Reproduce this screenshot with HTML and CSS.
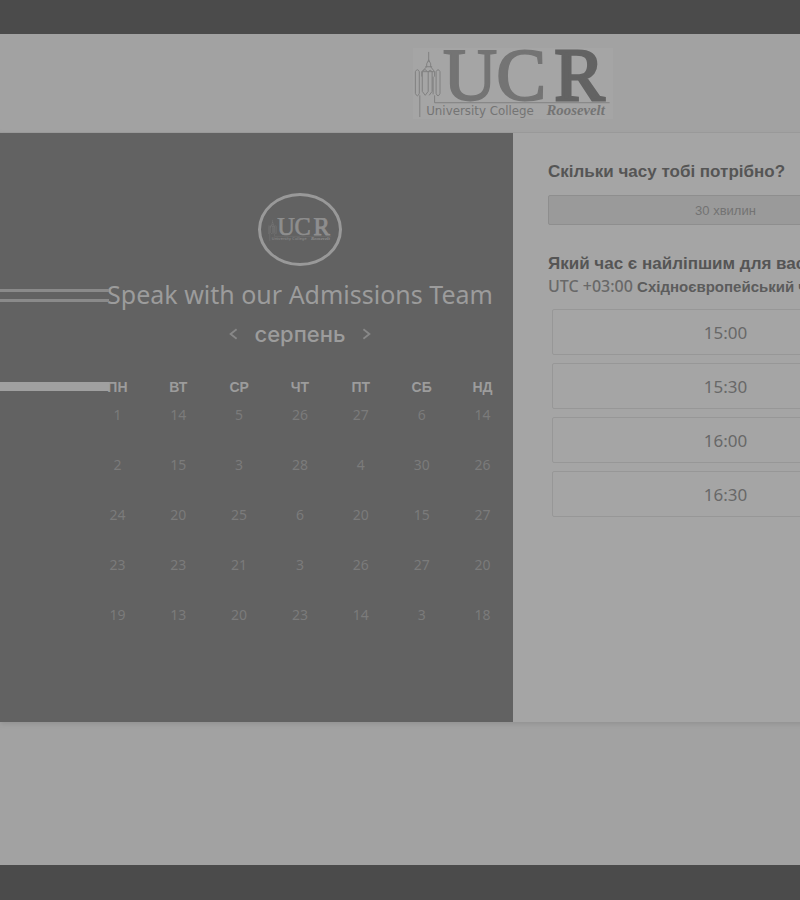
FILE: index.html
```html
<!DOCTYPE html>
<html lang="uk">
<head>
<meta charset="utf-8">
<title>University College Roosevelt</title>
<link rel="stylesheet" href="styles.css">
</head>
<body>
<svg width="0" height="0" class="defs" aria-hidden="true">
  <symbol id="ucr" viewBox="0 0 200 72">
    <g fill="none" stroke="currentColor" stroke-width="1" opacity=".75">
      <path d="M14.500 4v10M14.500 12l-2 4v3l-5 5v5M14.500 12l2 4v3l4 5v5M8 24h12M11 19h7"/>
      <path d="M1 24q2-4 4 0v22q-2 5-4 0zM8 24q3-4 5 0M8 24v20l3 4 3-4V24q2-3 4 0v20l-3 4M22 24q2-4 4 0v22q-2 5-4 0zM19 29v18"/>
      <path d="M5.500 48v22M20.500 48v7.500H198"/>
    </g>
    <g class="logo-letters">
      <text x="29" y="53">U</text>
      <text x="83" y="53">C</text>
      <text x="142" y="53" class="logo-r">R</text>
    </g>
    <text x="12" y="68" class="logo-name" fill="currentColor">University College</text>
    <text x="134" y="68" class="logo-roosevelt" fill="currentColor">Roosevelt</text>
  </symbol>
</svg>
<div class="page">
  <div class="bar"></div>
  <header class="header">
    <svg class="logo" role="img" aria-label="UCR University College Roosevelt"><use href="#ucr"/></svg>
  </header>
  <main class="booking">
    <section class="calendar">
      <div class="rules"><i class="rule"></i><i class="rule"></i><i class="rule thick"></i></div>
      <div class="calendar-body">
        <div class="badge"><svg class="badge-logo" aria-hidden="true"><use href="#ucr"/></svg></div>
        <h1 class="title">Speak with our Admissions Team</h1>
        <div class="month">
          <button class="nav" aria-label="Попередній місяць"><svg viewBox="0 0 8 10"><path d="M7 1L2 5l5 4"/></svg></button>
          <span>серпень</span>
          <button class="nav" aria-label="Наступний місяць"><svg viewBox="0 0 8 10"><path d="M1 1l5 4-5 4"/></svg></button>
        </div>
        <table class="days">
          <thead><tr><th>ПН</th><th>ВТ</th><th>СР</th><th>ЧТ</th><th>ПТ</th><th>СБ</th><th>НД</th></tr></thead>
          <tbody>
            <tr><td>1</td><td>14</td><td>5</td><td>26</td><td>27</td><td>6</td><td>14</td></tr>
            <tr><td>2</td><td>15</td><td>3</td><td>28</td><td>4</td><td>30</td><td>26</td></tr>
            <tr><td>24</td><td>20</td><td>25</td><td>6</td><td>20</td><td>15</td><td>27</td></tr>
            <tr><td>23</td><td>23</td><td>21</td><td>3</td><td>26</td><td>27</td><td>20</td></tr>
            <tr><td>19</td><td>13</td><td>20</td><td>23</td><td>14</td><td>3</td><td>18</td></tr>
          </tbody>
        </table>
      </div>
    </section>
    <section class="times">
      <h2 class="question">Скільки часу тобі потрібно?</h2>
      <button class="duration">30 хвилин</button>
      <h2 class="question">Який час є найліпшим для вас?</h2>
      <p class="zone"><span class="offset">UTC +03:00</span> Східноєвропейський час</p>
      <div class="slots">
        <button class="slot">15:00</button>
        <button class="slot">15:30</button>
        <button class="slot">16:00</button>
        <button class="slot">16:30</button>
      </div>
    </section>
  </main>
  <div class="space"></div>
  <div class="bar"></div>
</div>
</body>
</html>
```
FILE: styles.css
```css
* { box-sizing: border-box; }
body {
  margin: 0;
  overflow-x: hidden;
  background: #a2a2a2;
  font-family: "Noto Sans", "Liberation Sans", sans-serif;
}
button { font: inherit; color: inherit; cursor: pointer; }
h1, h2, p { margin: 0; }
.defs { position: absolute; }

.page {
  display: flex;
  flex-direction: column;
  min-width: 1026px;
  min-height: 100vh;
}
.bar { height: 34px; background: #4b4b4b; }
.bar:last-child { height: 35px; }
.space { flex: 1; }

.header {
  display: flex;
  justify-content: center;
  padding: 14px 0 13px;
  border-bottom: 1px solid #9b9b9b;
}
.logo { --mark-strong: #636363; width: 200px; height: 71px; color: #747474; background: #a5a5a5; }
.logo-letters { font: 76px "Liberation Serif", serif; fill: currentColor; stroke: currentColor; stroke-width: 2; }
.logo-r { fill: var(--mark-strong); stroke: var(--mark-strong); stroke-width: 3; }
.logo-name { font: 12px "DejaVu Sans", sans-serif; }
.logo-roosevelt { font: italic bold 15px "Liberation Serif", serif; }

.booking {
  display: grid;
  grid-template-columns: 1fr 1fr;
  min-height: 589px;
  box-shadow: 0 2px 5px #929292;
}
.calendar { position: relative; background: #626262; color: #9c9c9c; }
.calendar-body {
  display: flex;
  flex-direction: column;
  align-items: center;
  margin-left: 87px;
  padding-top: 60px;
}
.rules { position: absolute; top: 156px; left: 0; width: 109px; }
.rule { display: block; height: 3px; margin-bottom: 7px; background: #8a8a8a; }
.thick { height: 9px; margin-top: 80px; background: #a0a0a0; }

.badge {
  display: flex;
  align-items: center;
  justify-content: center;
  width: 84px;
  height: 73px;
  border: 3px solid #999;
  border-radius: 50%;
}
.badge-logo { --mark-strong: #8e8e8e; width: 64px; height: 24px; color: #8e8e8e; }
.title { margin-top: 8px; font-size: 25px; font-weight: 400; line-height: 40px; white-space: nowrap; }
.month {
  display: flex;
  align-items: center;
  gap: 16px;
  font: 500 22px/40px Inter, "Liberation Sans", sans-serif;
}
.nav { display: flex; padding: 0; border: 0; background: none; }
.nav svg { width: 10px; height: 12px; fill: none; stroke: #888; stroke-width: 1.5; }
.days {
  width: 100%;
  margin-top: 22px;
  border-collapse: collapse;
  table-layout: fixed;
  text-align: center;
}
.days th { padding: 0; font: bold 14px/22px "Liberation Sans", sans-serif; }
.days td { height: 50px; padding: 0; color: #7b7b7b; font-size: 14px; line-height: 34px; vertical-align: top; }

.times { padding: 28px 123px 0 35px; background: #a5a5a5; color: #555; }
.question { font: bold 17px/22px "Liberation Sans", sans-serif; white-space: nowrap; }
.duration {
  display: block;
  width: 100%;
  height: 30px;
  margin: 12px 0 28px;
  padding: 0;
  border: 1px solid #8e8e8e;
  border-radius: 2px;
  background: #9a9a9a;
  color: #737373;
  font: 13px "Liberation Sans", sans-serif;
}
.zone { color: #5c5c5c; font: bold 15px/24px "Liberation Sans", sans-serif; white-space: nowrap; }
.offset { color: #686868; font: 500 16px "Noto Sans", sans-serif; }
.slots { display: grid; gap: 8px; margin: 10px 4px 0; }
.slot {
  height: 46px;
  padding: 0;
  border: 1px solid #979797;
  border-radius: 2px;
  background: none;
  color: #686868;
  font-size: 17px;
}
```
